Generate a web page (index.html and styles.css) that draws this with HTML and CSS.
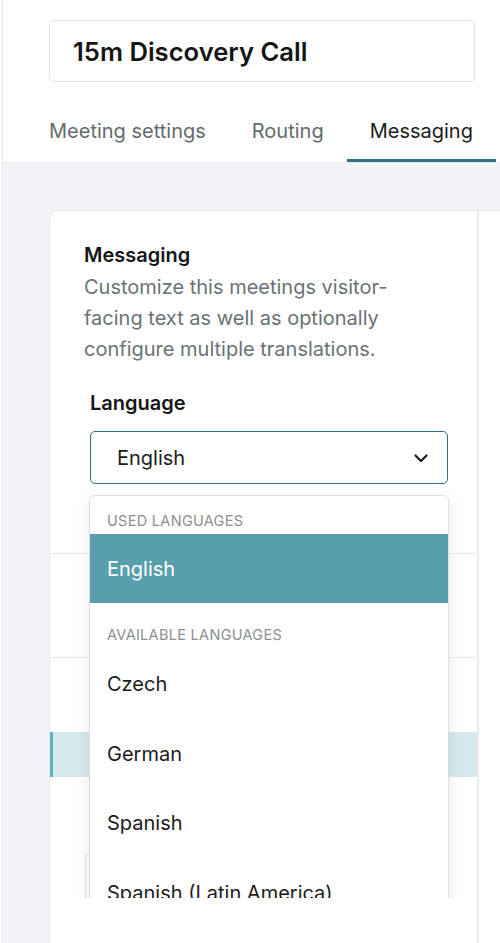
FILE: index.html
```html
<!DOCTYPE html>
<html>
<head>
<meta charset="utf-8">
<link rel="stylesheet" href="styles.css">
</head>
<body>
<div class="page">
  <header class="header">
    <div class="title-input">15m Discovery Call</div>
    <nav class="tabs">
      <div class="tab">Meeting settings</div>
      <div class="tab">Routing</div>
      <div class="tab active">Messaging</div>
    </nav>
  </header>
  <main class="main">
    <div class="panel">
      <section class="card">
        <div class="scroll">
          <div class="intro">
            <h2 class="heading">Messaging</h2>
            <p class="desc">Customize this meetings visitor-facing text as well as optionally configure multiple translations.</p>
            <div class="field">
              <label class="label">Language</label>
              <div class="select-wrap">
                <div class="select">
                  <span>English</span>
                  <svg class="chev" width="16" height="16" viewBox="0 0 16 16"><path d="M2.5 5.5 L8 11 L13.5 5.5" fill="none" stroke="#1b1b1b" stroke-width="2.2" stroke-linecap="round" stroke-linejoin="round"/></svg>
                </div>
                <div class="dropdown">
                  <div class="group-label first">Used languages</div>
                  <div class="option selected">English</div>
                  <div class="group-label second">Available languages</div>
                  <div class="option">Czech</div>
                  <div class="option">German</div>
                  <div class="option">Spanish</div>
                  <div class="option last">Spanish (Latin America)</div>
                </div>
              </div>
            </div>
          </div>
          <div class="section mid"></div>
          <div class="section list">
            <div class="row active"></div>
            <div class="mini-input"></div>
          </div>
        </div>
        <div class="footer"></div>
      </section>
      <div class="side"></div>
    </div>
  </main>
</div>
</body>
</html>
```
FILE: styles.css
```css
* { box-sizing: border-box; margin: 0; padding: 0; }
html, body { width: 500px; height: 943px; overflow: hidden; background: #fff; }
body { font-family: Inter, "Noto Sans", sans-serif; color: #1d1d1f; }

.page {
  margin-left: 2px;
  height: 943px;
  border-left: 1px solid #e4e6e9;
  display: flex;
  flex-direction: column;
}

.header {
  height: 163px;
  border-bottom: 1px solid #e6e8eb;
  padding-top: 20px;
  flex-shrink: 0;
}
.title-input {
  margin-left: 46px;
  width: 426px;
  height: 62px;
  border: 1px solid #dfe2e6;
  border-radius: 5px;
  padding-left: 23px;
  display: flex;
  align-items: center;
  font-size: 25.6px;
  font-weight: 600;
  color: #151515;
}
.tabs {
  display: flex;
  margin-top: 18px;
  padding-left: 23px;
  height: 62px;
}
.tab {
  padding: 3px 23px 0;
  display: flex;
  align-items: center;
  font-size: 20px;
  color: #626b6d;
  border-bottom: 3px solid transparent;
}
.tab.active {
  color: #1b1b1b;
  border-bottom-color: #2b7884;
}

.main {
  flex: 1;
  background: #f3f4f7;
  padding: 47px 0 0 46px;
  display: flex;
  min-height: 0;
}
.panel {
  flex: 1;
  background: #fff;
  border-top: 1px solid #e5e7ea;
  border-left: 1px solid #e5e7ea;
  border-top-left-radius: 9px;
  display: flex;
}
.card {
  width: 429px;
  border-right: 2px solid #ebecef;
  display: flex;
  flex-direction: column;
}
.side { flex: 1; }

.scroll {
  height: 687px;
  overflow: hidden;
  position: relative;
}
.footer { flex: 1; }

.intro {
  padding: 32px 30px 69px 34px;
}
.heading {
  font-size: 20px;
  font-weight: 600;
  line-height: 24px;
  color: #161616;
}
.desc {
  margin-top: 5px;
  font-size: 20px;
  line-height: 31px;
  color: #6a7275;
  width: 345px;
}
.field {
  margin-top: 26px;
  padding-left: 6px;
}
.label {
  display: block;
  font-size: 20px;
  font-weight: 600;
  line-height: 24px;
  color: #161616;
}
.select-wrap {
  position: relative;
  margin-top: 16px;
  width: 358px;
}
.select {
  height: 53px;
  border: 1.5px solid #30707e;
  border-radius: 5px;
  display: flex;
  align-items: center;
  justify-content: space-between;
  padding: 0 18px 0 26px;
  font-size: 20px;
  color: #1b1b1b;
}
.chev { display: block; }

.dropdown {
  position: absolute;
  top: 64px;
  left: -1px;
  width: 360px;
  background: #fff;
  border: 1px solid #dedede;
  border-radius: 6px;
  box-shadow: 0 4px 18px rgba(0, 0, 0, 0.08);
  overflow: hidden;
  z-index: 5;
}
.group-label {
  font-size: 14.5px;
  line-height: 18px;
  text-transform: uppercase;
  letter-spacing: 0.3px;
  color: #8d9092;
  padding-left: 17px;
}
.group-label.first { padding-top: 16px; height: 38px; }
.group-label.second { padding-top: 23px; height: 46.5px; }
.option {
  height: 69.5px;
  display: flex;
  align-items: center;
  padding-left: 17px;
  font-size: 20px;
  color: #1b1b1b;
}
.option.selected {
  height: 69px;
  background: #589fae;
  color: #fff;
}
.option.last {
  align-items: flex-start;
  padding-top: 23px;
}

.section { border-top: 1px solid #e6e8ea; }
.section.mid { height: 104px; }
.list { padding-top: 74px; }
.row.active {
  height: 45px;
  background: #d5e9ee;
  border-left: 3px solid #5ab2c2;
}
.mini-input {
  margin: 76px 0 0 35px;
  width: 300px;
  height: 50px;
  border: 1px solid #dcdfe2;
  border-radius: 5px;
}
```
